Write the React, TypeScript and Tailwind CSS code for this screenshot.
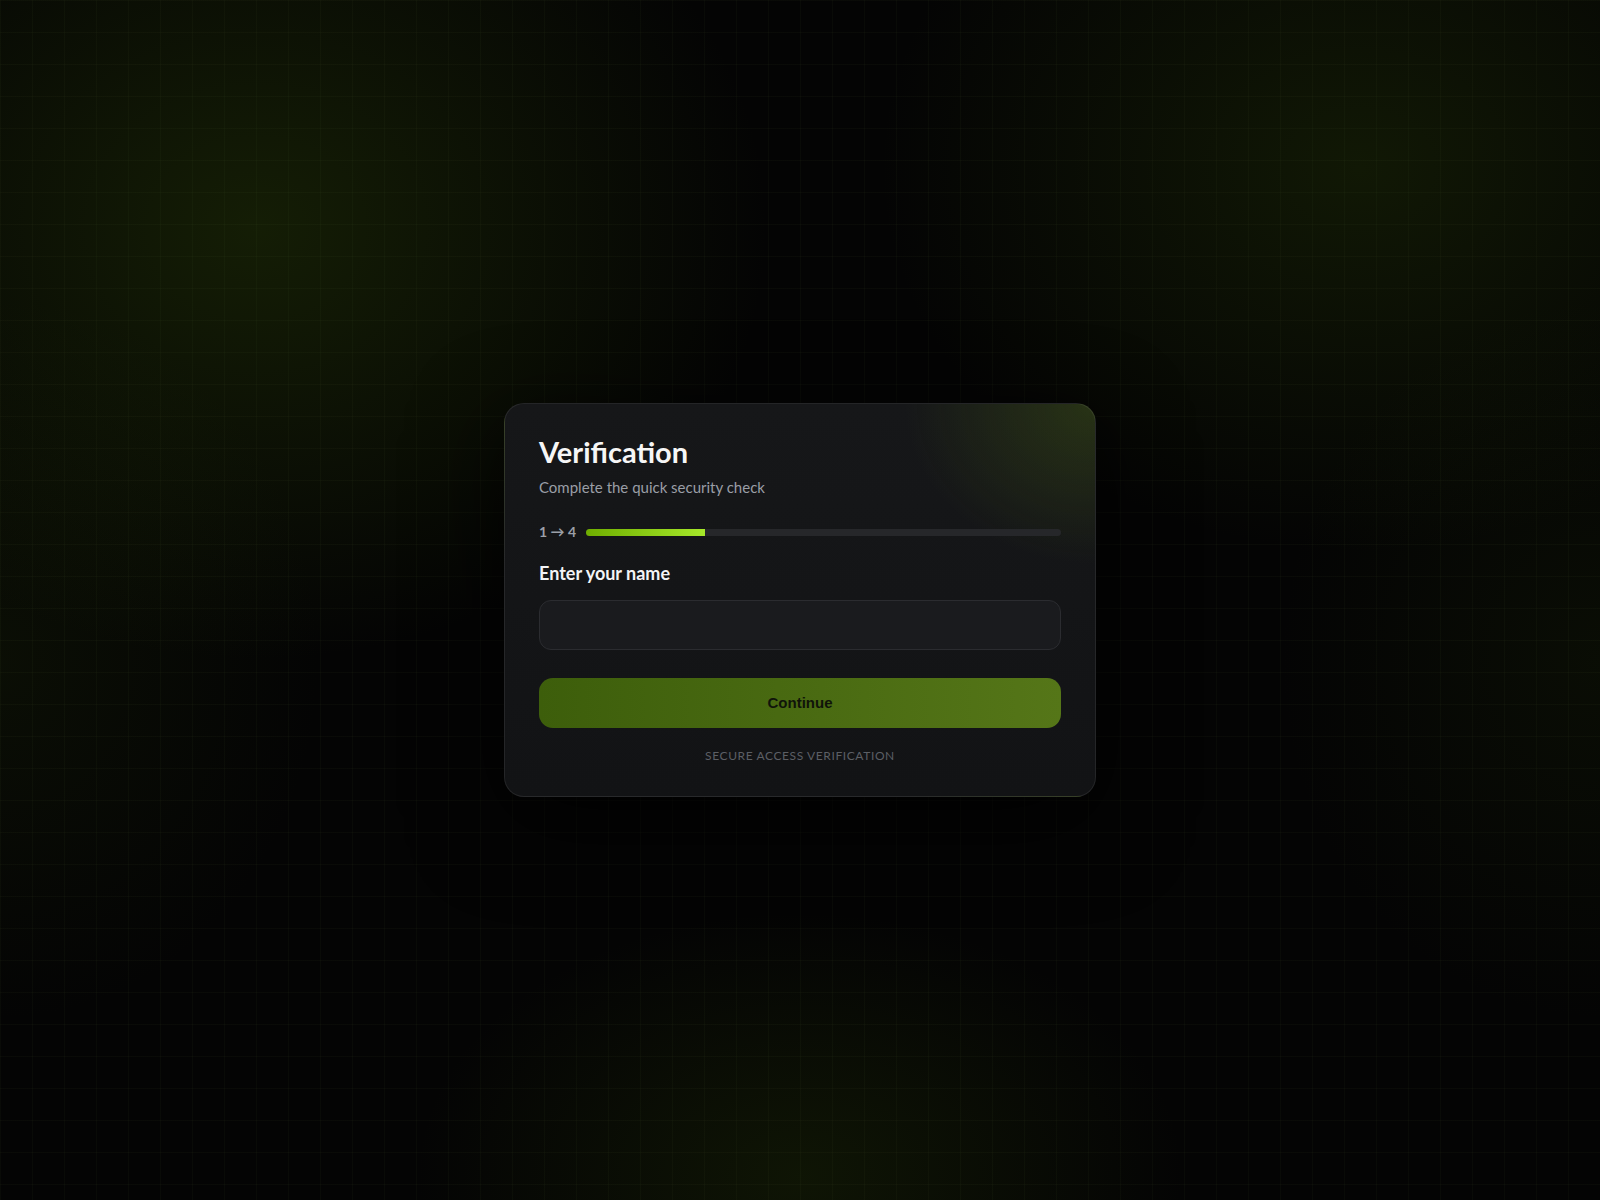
export default function App() {
  return (
    <div className="min-h-screen bg-[#040404] bg-[radial-gradient(ellipse_32%_36%_at_16%_19%,rgba(58,88,8,0.30),transparent),radial-gradient(ellipse_30%_32%_at_85%_14%,rgba(58,88,8,0.24),transparent),radial-gradient(ellipse_24%_22%_at_50%_98%,rgba(58,88,8,0.20),transparent),radial-gradient(ellipse_20%_30%_at_0%_55%,rgba(40,60,8,0.18),transparent),radial-gradient(ellipse_20%_30%_at_100%_55%,rgba(40,60,8,0.16),transparent)]">
      <div className="min-h-screen flex items-center justify-center bg-[linear-gradient(rgba(150,190,90,0.035)_1px,transparent_1px),linear-gradient(90deg,rgba(150,190,90,0.035)_1px,transparent_1px)] bg-size-[32px_32px]">
        <div className="w-[592px] rounded-[20px] border border-white/[0.08] bg-[radial-gradient(ellipse_190px_160px_at_100%_0%,rgba(75,105,15,0.34),transparent),linear-gradient(180deg,#161719,#121315)] px-[34px] pt-[34px] pb-[34px] shadow-[0_24px_90px_rgba(0,0,0,0.85)] font-['Lato','Noto_Sans',sans-serif]">
          <h1 className="text-[29px] leading-[28px] font-bold text-[#f6f6f6]">Verification</h1>
          <p className="mt-[14px] text-[15px] leading-[15px] text-[#9a9ea6]">Complete the quick security check</p>

          <div className="mt-[30px] flex items-center gap-[10px] h-[14px]">
            <span className="text-[14px] leading-[14px] font-bold text-[#9ca0a8] whitespace-nowrap">1 → 4</span>
            <div className="flex-1 h-[7px] rounded-full bg-[#26272a] overflow-hidden">
              <div className="h-full bg-[linear-gradient(90deg,#6fae00,#a6e82a)]" style={{ width: "25%" }} />
            </div>
          </div>

          <label className="mt-[26px] block text-[18px] leading-[17px] font-bold text-[#f3f4f6]">Enter your name</label>
          <input
            type="text"
            className="mt-[18px] block w-full h-[50px] rounded-xl border border-[#2b2c30] bg-[#1a1b1e] px-4 text-[15px] text-white outline-none"
          />

          <button className="mt-[28px] w-full h-[50px] rounded-[14px] bg-[linear-gradient(90deg,#3d5e0b,#557618)] font-['Liberation_Sans',Arial,sans-serif] text-[15px] font-bold text-[#10140a]">
            Continue
          </button>

          <p className="mt-[22px] text-center text-[12px] leading-[12px] tracking-[0.05em] uppercase text-[#5c5f65]">
            Secure access verification
          </p>
        </div>
      </div>
    </div>
  );
}
